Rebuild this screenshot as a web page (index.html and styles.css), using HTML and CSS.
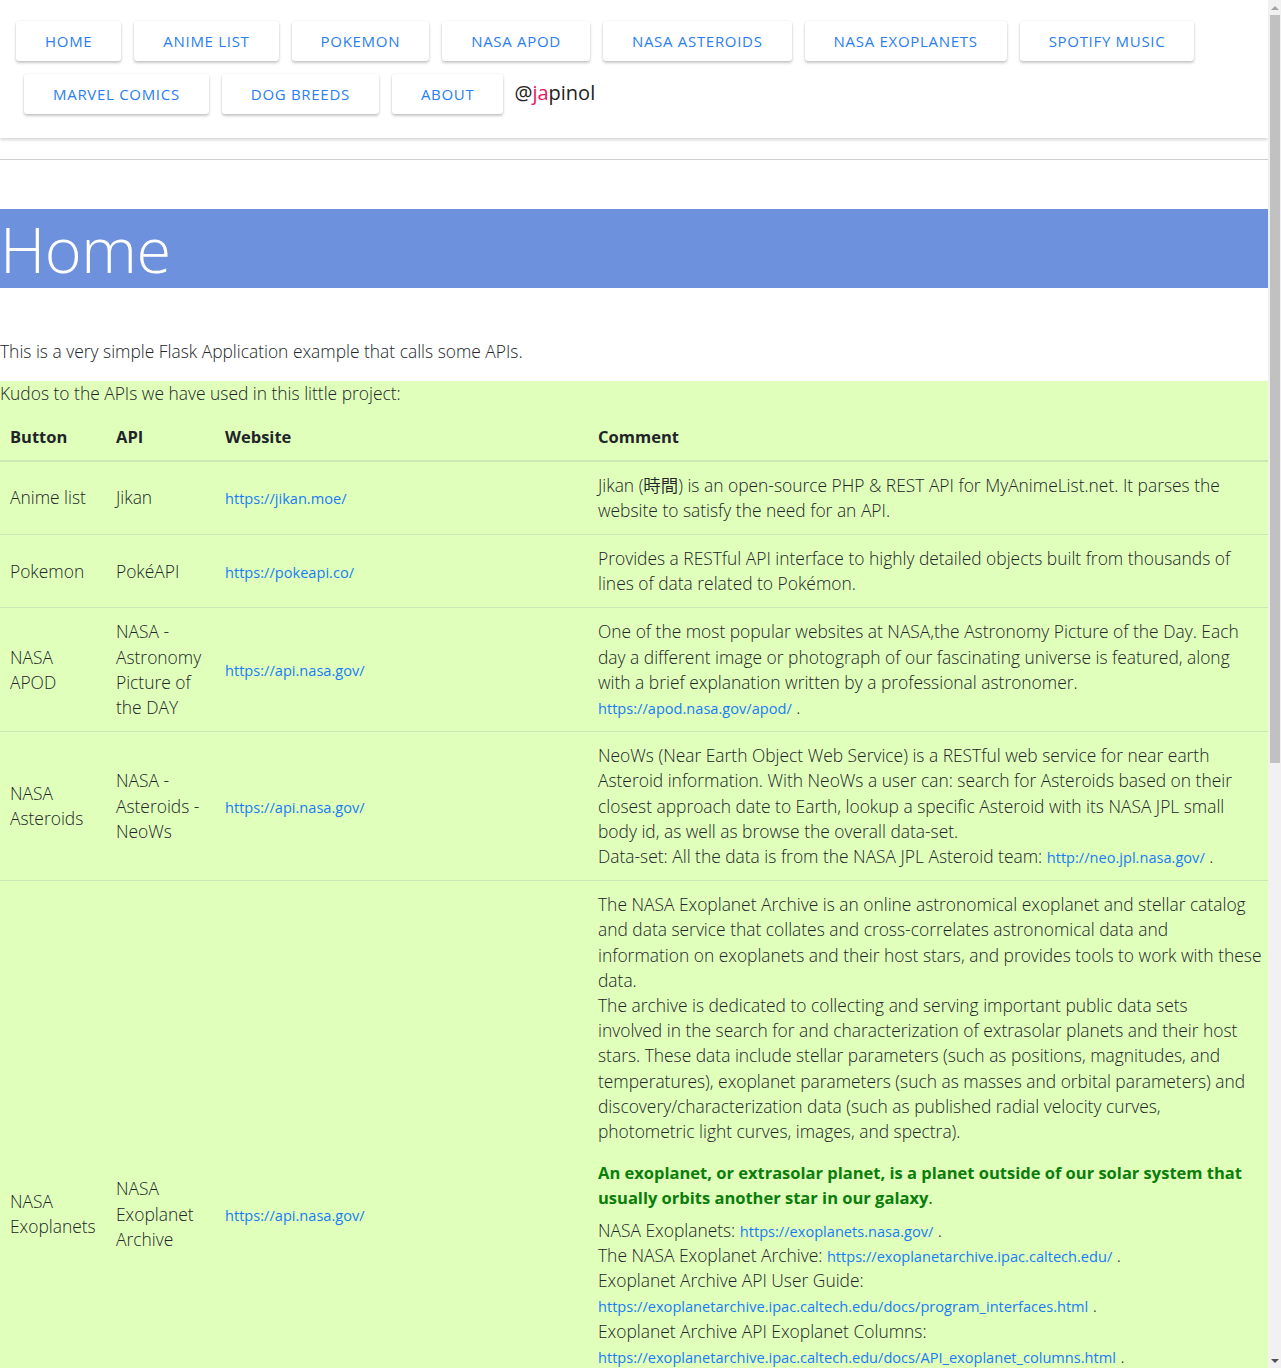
FILE: index.html
```html
<!DOCTYPE html>
<html lang="en">
<head>
<meta charset="utf-8">
<title>Home</title>
<link rel="stylesheet" href="styles.css">
</head>
<body>
<div class="page">
  <nav class="navbar">
    <div class="nav-row">
      <a class="btn" href="#">Home</a>
      <a class="btn" href="#">Anime list</a>
      <a class="btn" href="#">Pokemon</a>
      <a class="btn" href="#">NASA APOD</a>
      <a class="btn" href="#">NASA Asteroids</a>
      <a class="btn" href="#">NASA Exoplanets</a>
      <a class="btn" href="#">Spotify Music</a>
    </div>
    <div class="nav-row nav-row-2">
      <a class="btn" href="#">Marvel Comics</a>
      <a class="btn" href="#">Dog Breeds</a>
      <a class="btn" href="#">About</a>
      <span class="brand">@<span class="brand-accent">ja</span>pinol</span>
    </div>
  </nav>
  <hr class="sep">
  <header class="banner"><h1>Home</h1></header>
  <p class="intro">This is a very simple Flask Application example that calls some APIs.</p>
  <section class="kudos">
    <p class="kudos-title">Kudos to the APIs we have used in this little project:</p>
    <table class="api-table">
      <colgroup>
        <col class="c-button"><col class="c-api"><col class="c-site"><col class="c-comment">
      </colgroup>
      <thead>
        <tr><th>Button</th><th>API</th><th>Website</th><th>Comment</th></tr>
      </thead>
      <tbody>
        <tr>
          <td>Anime list</td>
          <td>Jikan</td>
          <td><a class="link" href="#">https://jikan.moe/</a></td>
          <td>Jikan (時間) is an open-source PHP &amp; REST API for MyAnimeList.net. It parses the website to satisfy the need for an API.</td>
        </tr>
        <tr>
          <td>Pokemon</td>
          <td>PokéAPI</td>
          <td><a class="link" href="#">https://pokeapi.co/</a></td>
          <td>Provides a RESTful API interface to highly detailed objects built from thousands of lines of data related to Pokémon.</td>
        </tr>
        <tr>
          <td>NASA APOD</td>
          <td>NASA - Astronomy Picture of the DAY</td>
          <td><a class="link" href="#">https://api.nasa.gov/</a></td>
          <td>One of the most popular websites at NASA,the Astronomy Picture of the Day. Each day a different image or photograph of our fascinating universe is featured, along with a brief explanation written by a professional astronomer.<br><a class="link" href="#">https://apod.nasa.gov/apod/</a> .</td>
        </tr>
        <tr>
          <td>NASA Asteroids</td>
          <td>NASA - Asteroids - NeoWs</td>
          <td><a class="link" href="#">https://api.nasa.gov/</a></td>
          <td>NeoWs (Near Earth Object Web Service) is a RESTful web service for near earth Asteroid information. With NeoWs a user can: search for Asteroids based on their closest approach date to Earth, lookup a specific Asteroid with its NASA JPL small body id, as well as browse the overall data-set.<br>Data-set: All the data is from the NASA JPL Asteroid team: <a class="link" href="#">http://neo.jpl.nasa.gov/</a> .</td>
        </tr>
        <tr>
          <td>NASA Exoplanets</td>
          <td>NASA Exoplanet Archive</td>
          <td><a class="link" href="#">https://api.nasa.gov/</a></td>
          <td>
            <p class="cell-p lines">The NASA Exoplanet Archive is an online astronomical exoplanet and stellar catalog<br>and data service that collates and cross-correlates astronomical data and<br>information on exoplanets and their host stars, and provides tools to work with these<br>data.<br>The archive is dedicated to collecting and serving important public data sets<br>involved in the search for and characterization of extrasolar planets and their host<br>stars. These data include stellar parameters (such as positions, magnitudes, and<br>temperatures), exoplanet parameters (such as masses and orbital parameters) and<br>discovery/characterization data (such as published radial velocity curves,<br>photometric light curves, images, and spectra).</p>
            <p class="highlight"><strong>An exoplanet, or extrasolar planet, is a planet outside of our solar system that usually orbits another star in our galaxy</strong>.</p>
            <p class="cell-p cell-last">NASA Exoplanets: <a class="link" href="#">https://exoplanets.nasa.gov/</a> .<br>The NASA Exoplanet Archive: <a class="link" href="#">https://exoplanetarchive.ipac.caltech.edu/</a> .<br>Exoplanet Archive API User Guide:<br><a class="link" href="#">https://exoplanetarchive.ipac.caltech.edu/docs/program_interfaces.html</a> .<br>Exoplanet Archive API Exoplanet Columns:<br><a class="link" href="#">https://exoplanetarchive.ipac.caltech.edu/docs/API_exoplanet_columns.html</a> .<br>Exoplanet Archive API Queries:<br><a class="link" href="#">https://exoplanetarchive.ipac.caltech.edu/docs/API_queries.html</a> .<br>Exoplanet Archive Data Columns:<br><a class="link" href="#">https://exoplanetarchive.ipac.caltech.edu/docs/API_PS_columns.html</a> .<br>Exoplanet Archive Tables:<br><a class="link" href="#">https://exoplanetarchive.ipac.caltech.edu/</a> .</p>
          </td>
        </tr>
      </tbody>
    </table>
  </section>
</div>
<div class="scrollbar">
  <div class="sb-arrow sb-up"></div>
  <div class="sb-track"><div class="sb-thumb"></div></div>
  <div class="sb-arrow sb-down"></div>
</div>
</body>
</html>
```
FILE: styles.css
```css
html, body {
  height: 100%;
}
body {
  margin: 0;
  display: flex;
  overflow: hidden;
  background: #fff;
  color: #212529;
  font-family: "Open Sans", "Noto Sans CJK JP", sans-serif;
  font-weight: 350;
  font-size: 17.4px;
  line-height: 25.2px;
}
.page {
  flex: 1;
  min-width: 0;
}
.navbar {
  background: #fff;
  padding: 21px 0 24px;
  display: flex;
  flex-direction: column;
  gap: 13px;
  box-shadow: 0 2px 3px rgba(0, 0, 0, 0.16);
}
.nav-row {
  display: flex;
  align-items: center;
  gap: 13px;
  padding-left: 16px;
}
.nav-row-2 {
  padding-left: 24px;
}
.btn {
  display: flex;
  align-items: center;
  justify-content: center;
  height: 40px;
  padding: 0 29px;
  background: #fff;
  border-radius: 3px;
  box-shadow: 0 2px 3px rgba(0, 0, 0, 0.22), 0 0 2px rgba(0, 0, 0, 0.08);
  color: #2a7ef0;
  text-decoration: none;
  text-transform: uppercase;
  font-size: 15px;
  font-weight: 400;
  letter-spacing: 0.7px;
  line-height: 20px;
}
.brand {
  font-size: 20px;
  font-weight: 400;
  color: #222;
  margin-top: -2px;
  margin-left: -2px;
}
.brand-accent {
  color: #e8175d;
}
.sep {
  margin: 21px 0 49px;
  border: 0;
  border-top: 1px solid #cfcfcf;
}
.banner {
  background: #6d91dc;
  height: 79px;
}
.banner h1 {
  margin: 0;
  color: #fff;
  font-weight: 300;
  font-size: 63px;
  line-height: 79px;
  letter-spacing: -0.5px;
}
.intro {
  margin: 51px 0 17px;
}
.kudos {
  background: #e0ffbb;
}
.kudos-title {
  margin: 0 0 7px;
}
.api-table {
  width: 100%;
  border-collapse: collapse;
  table-layout: fixed;
}
.c-button { width: 106px; }
.c-api { width: 109px; }
.c-site { width: 373px; }
.api-table th {
  text-align: left;
  font-weight: 700;
  font-size: 16.5px;
  padding: 11px 10px 10px;
  border-bottom: 2px solid #cde6b6;
}
.api-table td {
  padding: 11px 10px;
  vertical-align: middle;
  border-top: 1px solid #cde6b6;
}
.api-table tbody tr:first-child td {
  border-top: 0;
}
.link {
  color: #1a7cf5;
  text-decoration: none;
  font-size: 14.6px;
  font-weight: 400;
  line-height: 1;
}
.cell-p {
  margin: 0 0 16px;
}
.cell-last {
  margin-bottom: 16px;
}
.lines {
  white-space: nowrap;
}
.highlight {
  margin: 0 0 7px;
  color: #0a7d0a;
  font-weight: 400;
}
.highlight strong {
  font-weight: 700;
  font-size: 16.5px;
}
.scrollbar {
  width: 13px;
  flex: none;
  height: 100vh;
  background: #f1f1f1;
  display: flex;
  flex-direction: column;
}
.sb-arrow {
  height: 15px;
  flex: none;
  display: flex;
  align-items: center;
  justify-content: center;
}
.sb-up::before,
.sb-down::before {
  content: "";
  border-left: 4px solid transparent;
  border-right: 4px solid transparent;
}
.sb-up::before {
  border-bottom: 4px solid #a3a3a3;
}
.sb-down::before {
  border-top: 4px solid #505050;
}
.sb-track {
  flex: 1;
  padding: 0 1px 0 2px;
}
.sb-thumb {
  height: 748px;
  background: #c1c1c1;
}
```
